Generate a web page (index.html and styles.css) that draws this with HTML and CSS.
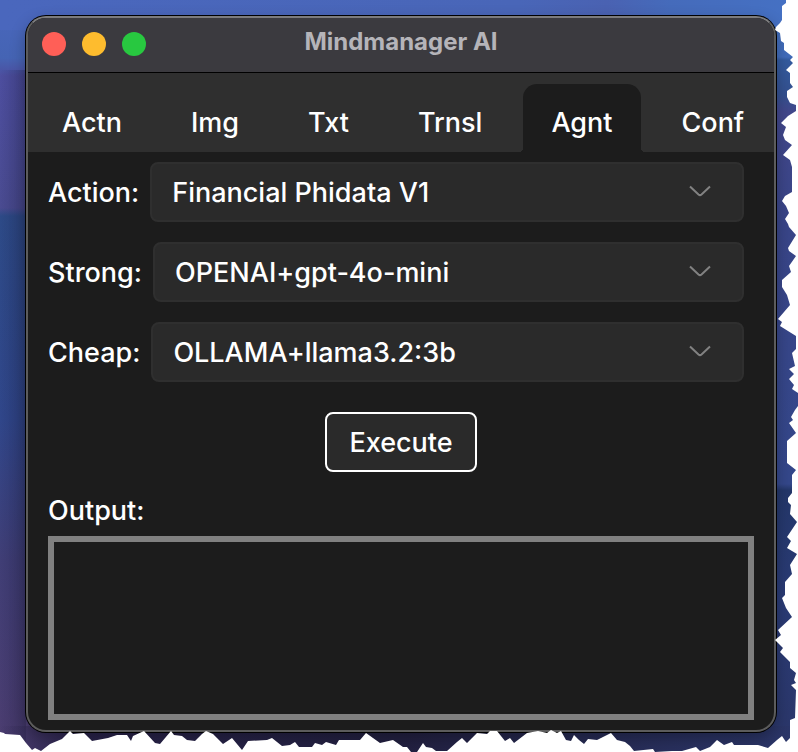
FILE: index.html
```html
<!DOCTYPE html>
<html lang="en">
<head>
<meta charset="utf-8">
<title>Mindmanager AI</title>
<link rel="stylesheet" href="styles.css">
</head>
<body>
<main class="window">
  <header class="titlebar">
    <div class="lights">
      <button class="light close" type="button" aria-label="Close"></button>
      <button class="light minimize" type="button" aria-label="Minimize"></button>
      <button class="light zoom" type="button" aria-label="Zoom"></button>
    </div>
    <h1 class="title">Mindmanager AI</h1>
  </header>
  <nav class="tabs" role="tablist">
    <button class="tab" type="button" role="tab">Actn</button>
    <button class="tab" type="button" role="tab">Img</button>
    <button class="tab" type="button" role="tab">Txt</button>
    <button class="tab" type="button" role="tab">Trnsl</button>
    <button class="tab active" type="button" role="tab" aria-selected="true">Agnt</button>
    <button class="tab last" type="button" role="tab">Conf</button>
  </nav>
  <form class="panel">
    <div class="row">
      <label for="action">Action:</label>
      <div class="picker">
        <select id="action"><option>Financial Phidata V1</option></select>
        <svg class="chevron" viewBox="0 0 22 12" aria-hidden="true"><path d="M1 1.5 L9.5 9.5 Q11 10.7 12.5 9.5 L21 1.5"/></svg>
      </div>
    </div>
    <div class="row">
      <label for="strong">Strong:</label>
      <div class="picker">
        <select id="strong"><option>OPENAI+gpt-4o-mini</option></select>
        <svg class="chevron" viewBox="0 0 22 12" aria-hidden="true"><path d="M1 1.5 L9.5 9.5 Q11 10.7 12.5 9.5 L21 1.5"/></svg>
      </div>
    </div>
    <div class="row">
      <label for="cheap">Cheap:</label>
      <div class="picker">
        <select id="cheap"><option>OLLAMA+llama3.2:3b</option></select>
        <svg class="chevron" viewBox="0 0 22 12" aria-hidden="true"><path d="M1 1.5 L9.5 9.5 Q11 10.7 12.5 9.5 L21 1.5"/></svg>
      </div>
    </div>
    <button class="execute" type="button">Execute</button>
    <label class="output-label" for="output">Output:</label>
    <textarea class="output" id="output"></textarea>
  </form>
</main>
<svg class="torn-edge" viewBox="0 0 798 752" preserveAspectRatio="none" aria-hidden="true">
  <path d="M798 0 H786 V3 L782 6 V20 L780 23 L776 27 L775 30 L780 33 L781 41 L784 43 V50 L793 57 L790 60 L793 63 L786 70 L790 73 V83 L793 87 L787 91 V97 L790 103 L796 105 V111 L788 116 L781 123 L786 127 L783 135 L785 140 L792 145 L783 155 L790 160 L792 167 V192 L785 196 L782 201 L786 206 L789 213 L785 219 L788 224 L789 227 L796 235 L788 248 L789 251 L796 256 L789 266 L791 272 L782 280 V287 L787 295 L790 305 L778 319 L782 322 L780 326 L796 336 V349 L792 353 L795 366 L789 369 L794 374 L789 379 L794 385 L792 389 L798 393 V406 L795 410 L791 417 L793 420 L789 423 L796 433 L787 441 V463 L796 470 L792 475 V493 L788 498 V502 L791 505 L790 514 L797 522 L787 537 L791 541 L787 548 L797 554 L790 565 L792 574 L785 582 V595 L782 598 L786 608 L792 617 L778 630 L781 635 L775 640 L783 648 L780 652 L790 662 V668 L796 673 L794 680 L796 683 L791 685 L796 690 L795 718 L790 720 V738 L786 742 L782 736 L777 740 L768 748 L758 745 H734 L732 742 L724 745 L717 740 L710 747 L700 751 L696 747 L682 751 H672 L655 752 L653 749 L634 751 L630 746 L625 742 L617 740 L611 733 L603 737 L597 740 L588 739 L584 744 L579 740 L574 735 L571 741 L566 740 L561 731 L557 733 L551 730 L547 733 L538 731 L527 733 L514 743 L510 738 L505 741 L497 731 H490 L487 734 L477 733 L467 743 L462 738 L457 742 L447 751 H436 L432 748 L426 747 L423 743 L417 752 H411 L407 747 H403 L393 740 L380 743 L366 733 L360 740 H339 L336 745 L326 742 L322 745 L315 743 L312 747 H299 L295 742 L290 745 L282 746 L272 738 L267 740 L248 741 L242 750 L232 738 L223 744 L213 734 L206 731 L202 734 L195 741 L187 740 L182 736 L174 735 L171 731 L160 744 L155 743 L144 731 L133 736 L131 741 L127 735 H117 L108 738 L92 741 L84 733 L73 734 L70 731 L62 739 L50 744 L41 751 L35 748 L32 750 L26 743 L20 735 L5 734 L4 733 L0 732 V752 H798 Z"/>
</svg>
</body>
</html>
```
FILE: styles.css
```css
* {
  box-sizing: border-box;
}

body {
  position: relative;
  display: flex;
  min-height: 100vh;
  margin: 0;
  padding: 16px 22px 20px 26px;
  font-family: Inter, "Liberation Sans", sans-serif;
  font-size: 27px;
  font-weight: 450;
  line-height: 32px;
  color: #fff;
  background:
    linear-gradient(90deg, rgba(35, 32, 68, 0), #29234a 80px, #222040 50%, #2b3669) left bottom / 100% 26px no-repeat,
    linear-gradient(90deg, #4a67bd 0, #4966b8 65%, #4a62b2 76%, #456bbb 84%, #4571c4) left top / 100% 30px no-repeat,
    linear-gradient(180deg, #436eb9 0, #416cbb 57px, #345b9f 60px, #34508f 95px, #42478b 112px, #394588 220px, #34478a 484px, #24376a 490px, #2a3b75 600px, #2b3669 752px) right top / 60px 100% no-repeat,
    linear-gradient(90deg, rgba(20, 20, 50, 0), rgba(20, 20, 50, 0.25)) 0 70px / 26px 100% no-repeat,
    linear-gradient(180deg, #4a67bd 0, #4564b4 58px, #4d4e9f 76px, #4a4b91 208px, #2d4a87 216px, #30468a 420px, #403e76 560px, #4c3d70 752px);
}

button,
select,
textarea {
  margin: 0;
  color: inherit;
  font: inherit;
}

.window {
  display: flex;
  flex: 1;
  flex-direction: column;
  min-width: 0;
  overflow: hidden;
  background: #1c1c1c;
  border: 2px solid #5c5c5c;
  border-top-color: #7c7c7e;
  border-radius: 20px;
  box-shadow: 0 0 0 1px #000, 0 6px 16px rgba(0, 0, 0, 0.3);
}

.titlebar {
  display: grid;
  grid-template-columns: 1fr auto 1fr;
  align-items: center;
  height: 55px;
  padding: 0 14px 2px;
  background: #3b3a3f;
  border-bottom: 1px solid #000;
}

.lights {
  display: flex;
  gap: 16px;
}

.light {
  width: 24px;
  height: 24px;
  padding: 0;
  border: 0;
  border-radius: 50%;
}

.close {
  background: #ff5f57;
}

.minimize {
  background: #febc2e;
}

.zoom {
  background: #28c840;
}

.title {
  margin: 0;
  padding-bottom: 4px;
  font-size: 24px;
  font-weight: 700;
  color: #b5b4b9;
}

.tabs {
  display: flex;
  gap: 13px;
  height: 79px;
  padding: 11px 32px 0 6px;
  background: #2f2f2f;
}

.tab {
  position: relative;
  flex: none;
  padding: 10px 28px 0;
  background: none;
  border: 0;
}

.active {
  background: #1c1c1c;
  border-radius: 14px 14px 0 0;
}

.active::before,
.active::after {
  content: "";
  position: absolute;
  bottom: 0;
  width: 4px;
  height: 4px;
}

.active::before {
  right: 100%;
  background: radial-gradient(circle at 0 0, transparent 4px, #1c1c1c 4px);
}

.active::after {
  left: 100%;
  background: radial-gradient(circle at 100% 0, transparent 4px, #1c1c1c 4px);
}

.last {
  padding-right: 0;
}

.panel {
  display: flex;
  flex: 1;
  flex-direction: column;
  gap: 20px;
  padding: 10px 20px;
}

.row {
  display: flex;
  align-items: center;
  gap: 11px;
  padding-right: 10px;
}

.row label {
  padding-top: 2px;
}

.picker {
  position: relative;
  flex: 1;
}

.picker select {
  display: block;
  width: 100%;
  height: 60px;
  padding: 2px 60px 0 20px;
  appearance: none;
  background: #2a2a2a;
  border: 2px solid #2f2f2f;
  border-radius: 8px;
}

.chevron {
  position: absolute;
  top: 23px;
  right: 33px;
  width: 22px;
  height: 12px;
  fill: none;
  stroke: #828282;
  stroke-width: 2;
  pointer-events: none;
}

.execute {
  align-self: center;
  height: 60px;
  margin-top: 10px;
  padding: 2px 22px 0;
  background: #2a2a2a;
  border: 2px solid #fff;
  border-radius: 8px;
}

.output-label {
  padding-top: 3px;
}

.output {
  flex: 1;
  width: 100%;
  margin-top: -11px;
  padding: 8px;
  background: #1c1c1c;
  border: 6px solid #808080;
  outline: none;
  resize: none;
}

.torn-edge {
  position: absolute;
  inset: 0;
  width: 100%;
  height: 100%;
  fill: #fff;
  pointer-events: none;
}
```
